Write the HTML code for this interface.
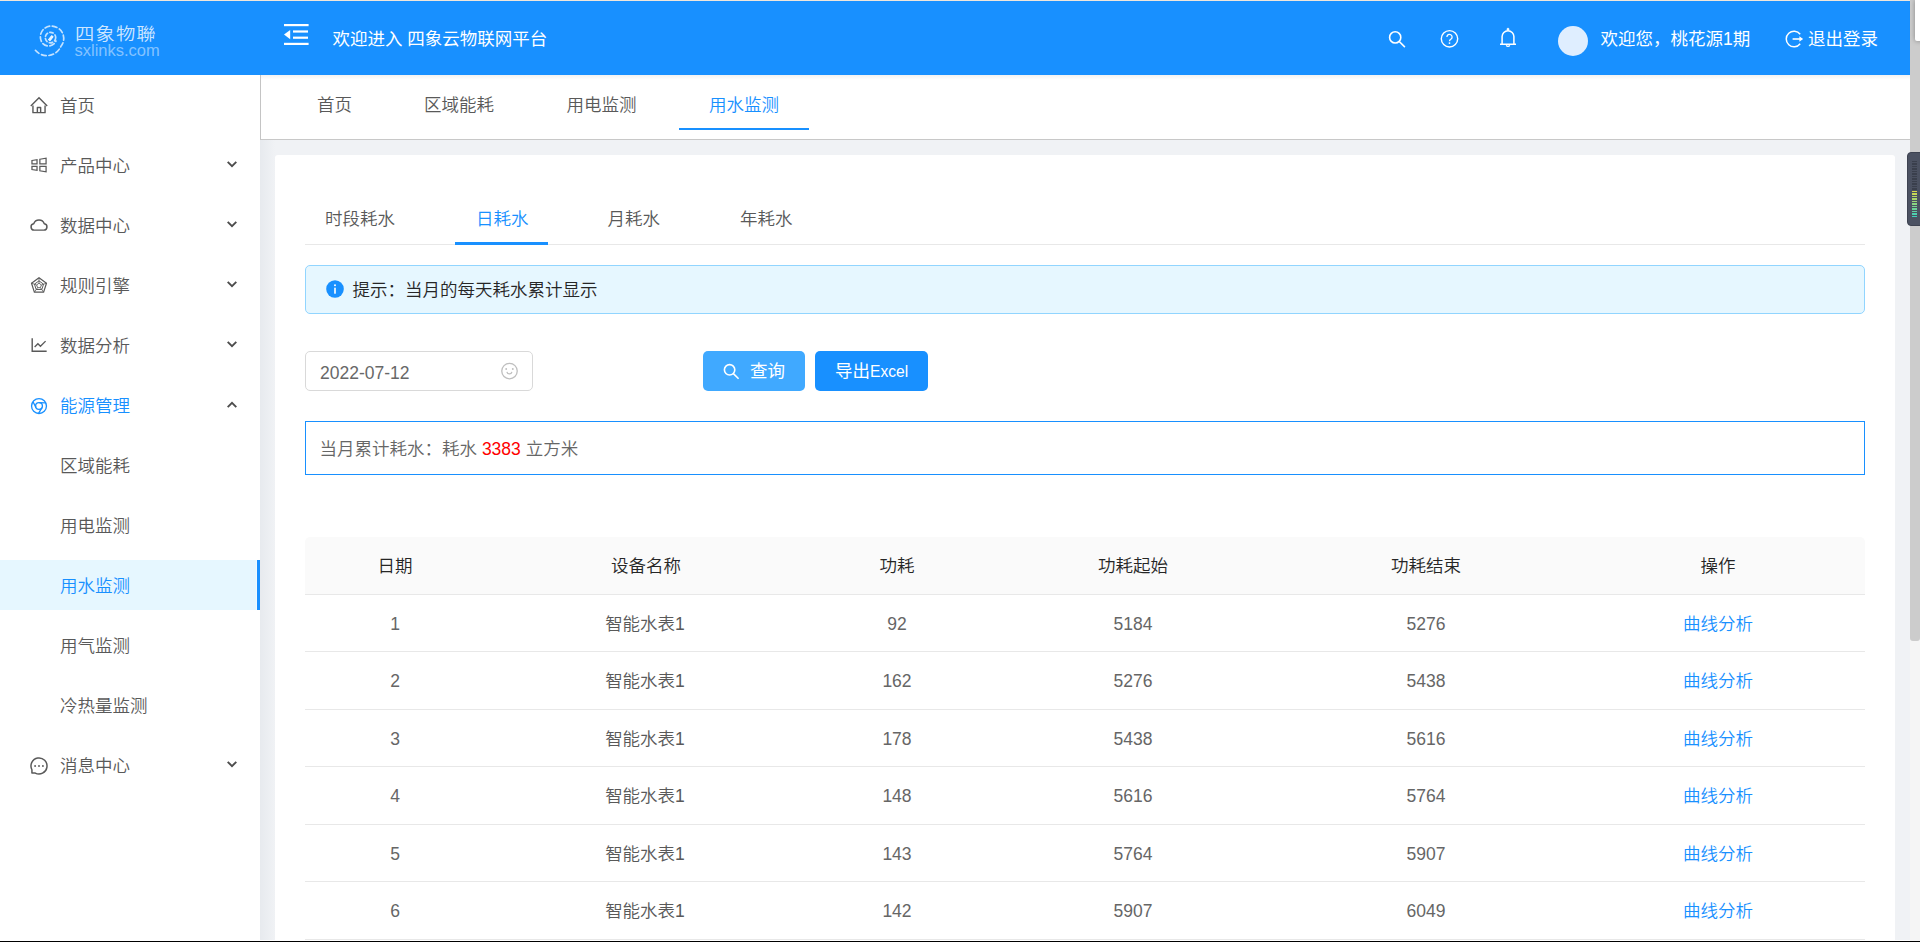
<!DOCTYPE html>
<html lang="zh-CN">
<head>
<meta charset="utf-8">
<title>四象云物联网平台</title>
<style>
*{box-sizing:border-box;margin:0;padding:0}
html,body{width:1920px;height:942px;overflow:hidden;background:#f0f2f5}
body{position:relative;font-family:"Liberation Sans","Noto Sans CJK SC",sans-serif;font-size:17.5px;color:#595959;font-weight:350}
.abs{position:absolute}
.t{position:absolute;white-space:nowrap;line-height:26px;height:26px}
svg{position:absolute;overflow:visible}
/* header */
#topline{left:0;top:0;width:1920px;height:1px;background:#efe6dc}
#header{left:0;top:1px;width:1910px;height:74px;background:#1890ff}
#hdr .t{font-weight:400}
/* sidebar */
#side{left:0;top:75px;width:260px;height:867px;background:#fff}
#sideshadow{left:260px;top:140px;width:15px;height:802px;background:linear-gradient(90deg,#e7eaee,#f0f2f5)}
.mi{position:absolute;left:60px;white-space:nowrap;line-height:26px;height:26px;color:#595959}
.ic{stroke:#595959;fill:none;stroke-width:72;stroke-linejoin:round;stroke-linecap:butt}
.chev{stroke:#4d4d4d;fill:none;stroke-width:1.9}
#sel{left:0;top:560px;width:256px;height:50px;background:#e6f7ff}
#selbar{left:256px;top:560px;width:4px;height:50px;background:#1890ff;border-left:1px solid #f2faff}
/* tab bar */
#tabbar{left:260px;top:75px;width:1650px;height:65px;background:#fff;border-left:1px solid #c4c4c4;border-bottom:1px solid #c8c8c8}
/* card */
#card{left:275px;top:155px;width:1620px;height:800px;background:#fff;border-radius:3px}
#subline{left:305px;top:244px;width:1560px;height:1px;background:#e8e8e8}
#subink{left:455px;top:242px;width:93px;height:3px;background:#1890ff}
#alert{left:305px;top:265px;width:1560px;height:49px;background:#e6f7ff;border:1px solid #91d5ff;border-radius:5px}
#dateinp{left:305px;top:351px;width:228px;height:40px;background:#fff;border:1px solid #d9d9d9;border-radius:5px}
#btn1{left:703px;top:351px;width:102px;height:40px;background:#40a9ff;border-radius:5px}
#btn2{left:815px;top:351px;width:113px;height:40px;background:#1890ff;border-radius:5px}
#sum{left:305px;top:421px;width:1560px;height:54px;background:#fff;border:1px solid #1890ff}
#thead{left:305px;top:537px;width:1560px;height:57px;background:#fafafa;border-radius:5px 5px 0 0}
.rl{position:absolute;left:305px;width:1560px;height:1px;background:#e8e8e8}
.c{position:absolute;white-space:nowrap;line-height:26px;height:26px;width:300px;text-align:center;color:#595959}
.h{color:#262626}
.n{color:#666}
.a{color:#1890ff}
/* scrollbar */
#sbtrack{left:1910px;top:0;width:10px;height:942px;background:#f5f5f5}
#sbthumb{left:1910px;top:0;width:10px;height:641px;background:#ccc;border-radius:0 0 3px 3px}
#corner{left:1915px;top:0;width:8px;height:41px;background:#fff;box-shadow:0 0 5px rgba(0,0,0,.35);border-radius:0 0 0 2px}
#widget{left:1907px;top:152px;width:16px;height:74px;background:#4b5161;border-radius:4px 0 0 4px;border:1px solid #3d4250}
.led{position:absolute;left:1912px;width:5px;height:1.5px}
#bottom{left:0;top:941px;width:1920px;height:1px;background:#000}
#bottomw{left:0;top:940px;width:1910px;height:1px;background:#fff}
#tabshadow{left:261px;top:75px;width:1649px;height:5px;background:linear-gradient(#f2f2f2,#fff)}
</style>
</head>
<body>
<div class="abs" id="topline"></div>
<div class="abs" id="header"></div>
<div class="abs" id="side"></div>
<div class="abs" id="tabbar"></div>
<div class="abs" id="tabshadow"></div>
<div class="abs" id="sideshadow"></div>
<div class="abs" id="card"></div>

<!-- HEADER CONTENT -->
<div id="hdr">
<!-- logo -->
<svg id="logo" style="left:30px;top:20px" width="40" height="40" viewBox="30 20 40 40" fill="none" stroke="rgba(255,255,255,.74)" stroke-linecap="round">
<path d="M35.4 50.3A15.1 15.1 0 0 0 60.8 46.5A12.4 12.4 0 0 0 51.5 26.1A10.8 10.8 0 0 0 41.4 41.5A8 8 0 0 0 56 41" stroke-width="1.7" stroke-dasharray="4.8 2.7"/>
<circle cx="50.5" cy="37.6" r="5.2" stroke-width="1.7" stroke-dasharray="3.4 2.4"/>
<path d="M48.6 39.4l3-3.8 1.6 1.1-2.8 3.8z" fill="rgba(255,255,255,.9)" stroke="rgba(255,255,255,.9)" stroke-width="1"/>
</svg>
<div class="t" style="left:75px;top:22.3px;font-size:16.8px;letter-spacing:1px;color:rgba(255,255,255,.8);font-weight:350;transform:scaleX(1.15);transform-origin:0 0">四象物聯</div>
<div class="t" style="left:74.5px;top:36.5px;font-size:16.5px;color:rgba(255,255,255,.47)">sxlinks.com</div>
<!-- fold icon -->
<svg style="left:284px;top:24px" width="25" height="22" viewBox="0 0 25 22" fill="#fff">
<rect x="0" y="0" width="24.6" height="2.2"/><rect x="9" y="6.4" width="15" height="2.2"/><rect x="9" y="12.6" width="15" height="2.2"/><rect x="0" y="18.8" width="24.6" height="2.2"/>
<path d="M0 10.6L6.2 6v9.2z"/>
</svg>
<div class="t" style="left:332.5px;top:26px;color:#fff">欢迎进入 四象云物联网平台</div>
<!-- search -->
<svg style="left:1388px;top:30px" width="18" height="18" viewBox="0 0 18 18" fill="none" stroke="#fff" stroke-width="1.6"><circle cx="7.2" cy="7.4" r="5.6"/><path d="M11.3 11.5l5.6 5.6"/></svg>
<!-- question -->
<svg style="left:1440px;top:29px" width="19" height="19" viewBox="0 0 19 19" fill="none" stroke="#fff" stroke-width="1.4"><circle cx="9.5" cy="9.8" r="8.2"/><path d="M6.9 7.9a2.6 2.6 0 1 1 3.9 2.3c-.9.5-1.3 1-1.3 2" stroke-width="1.3"/><circle cx="9.5" cy="14.1" r=".9" fill="#fff" stroke="none"/></svg>
<!-- bell -->
<svg style="left:1499px;top:27px" width="18" height="22" viewBox="0 0 18 22" fill="none" stroke="#fff" stroke-width="1.5"><path d="M1 17.3h16M3.1 17.3V9.6a5.9 5.9 0 0 1 11.8 0v7.7"/><circle cx="9" cy="2.2" r="1" fill="#fff" stroke-width=".8"/><path d="M7.3 18.2a1.8 1.8 0 0 0 3.4 0" stroke-width="1.3"/></svg>
<div class="abs" style="left:1558px;top:26px;width:30px;height:30px;border-radius:50%;background:#dfeeff"></div>
<div class="t" style="left:1600.5px;top:26px;color:#fff">欢迎您，桃花源1期</div>
<!-- logout -->
<svg style="left:1785px;top:30px" width="19" height="18" viewBox="0 0 19 18" fill="none" stroke="#fff" stroke-width="1.5"><path d="M15.2 4.2a7.8 7.8 0 1 0 0 9.6"/><path d="M7.6 9h9.6" stroke-width="1.6"/><path d="M14.4 6.3l3.6 2.7-3.6 2.7z" fill="#fff" stroke="none"/></svg>
<div class="t" style="left:1808px;top:26px;color:#fff">退出登录</div>
</div>

<!-- SIDEBAR CONTENT -->
<div id="menu">
<div class="abs" id="sel"></div><div class="abs" id="selbar"></div>
<!-- home -->
<svg class="ic" style="left:29px;top:95px" width="20" height="20" viewBox="0 0 1024 1024"><path d="M92 566L512 146l420 420" stroke-linejoin="miter"/><path d="M202 540v364h620V540"/><path d="M428 904V636h168v268"/></svg>
<div class="mi" style="top:93px">首页</div>
<!-- windows -->
<svg class="ic" style="left:29px;top:155px;stroke-width:64" width="20" height="20" viewBox="0 0 1024 1024"><path d="M152 282l259-43v209H152zM152 576h259v210l-259-42zM556 218l318-53v283H556zM556 576h318v283l-318-52z" stroke-linejoin="miter"/></svg>
<div class="mi" style="top:153px">产品中心</div>
<!-- cloud -->
<svg class="ic" style="left:29px;top:215px;stroke-width:76" width="20" height="20" viewBox="0 0 1024 1024"><path d="M264 774A162 162 0 0 1 242 452A286 286 0 0 1 782 452A162 162 0 0 1 760 774z"/></svg>
<div class="mi" style="top:213px">数据中心</div>
<!-- radar -->
<svg class="ic" style="left:29px;top:275px;stroke-width:62" width="20" height="20" viewBox="0 0 1024 1024"><path d="M512 142L895 420 749 880H275L129 420z"/><path d="M512 300L745 469 656 742H368L279 469z" stroke-width="50"/><path d="M512 420l120 88-46 141H438l-46-141z" stroke-width="44"/><path d="M512 142v278M895 420L632 508M749 880L586 649M275 880l163-231M129 420l263 88" stroke-width="40"/></svg>
<div class="mi" style="top:273px">规则引擎</div>
<!-- line chart -->
<svg class="ic" style="left:29px;top:335px" width="20" height="20" viewBox="0 0 1024 1024"><path d="M164 160v668h740" stroke-linejoin="miter"/><path d="M288 616l168-168 130 130 264-264" stroke-width="70" stroke-linejoin="miter"/></svg>
<div class="mi" style="top:333px">数据分析</div>
<!-- chrome -->
<svg class="ic" style="left:29px;top:395.5px;stroke:#1890ff;stroke-width:68" width="20" height="20" viewBox="0 0 1024 1024"><circle cx="512" cy="512" r="382"/><circle cx="512" cy="512" r="174"/><path d="M512 338l340 18M663 598L490 890M361 598L205 296"/></svg>
<div class="mi" style="top:393px;color:#1890ff">能源管理</div>
<div class="mi" style="top:453px">区域能耗</div>
<div class="mi" style="top:513px">用电监测</div>
<div class="mi" style="top:573px;color:#1890ff">用水监测</div>
<div class="mi" style="top:633px">用气监测</div>
<div class="mi" style="top:693px">冷热量监测</div>
<!-- message -->
<svg class="ic" style="left:29px;top:755.5px;stroke-width:76" width="20" height="20" viewBox="0 0 1024 1024"><path d="M150 704A410 410 0 1 1 320 874H150z"/><circle cx="312" cy="512" r="48" fill="#595959" stroke="none"/><circle cx="512" cy="512" r="48" fill="#595959" stroke="none"/><circle cx="712" cy="512" r="48" fill="#595959" stroke="none"/></svg>
<div class="mi" style="top:753px">消息中心</div>
<!-- chevrons -->
<svg class="chev" style="left:226px;top:160px" width="12" height="8" viewBox="0 0 12 8"><path d="M1.7 1.8L6 6.1l4.3-4.3"/></svg>
<svg class="chev" style="left:226px;top:220px" width="12" height="8" viewBox="0 0 12 8"><path d="M1.7 1.8L6 6.1l4.3-4.3"/></svg>
<svg class="chev" style="left:226px;top:280px" width="12" height="8" viewBox="0 0 12 8"><path d="M1.7 1.8L6 6.1l4.3-4.3"/></svg>
<svg class="chev" style="left:226px;top:340px" width="12" height="8" viewBox="0 0 12 8"><path d="M1.7 1.8L6 6.1l4.3-4.3"/></svg>
<svg class="chev" style="left:226px;top:401px" width="12" height="8" viewBox="0 0 12 8"><path d="M1.7 6.2L6 1.9l4.3 4.3"/></svg>
<svg class="chev" style="left:226px;top:760px" width="12" height="8" viewBox="0 0 12 8"><path d="M1.7 1.8L6 6.1l4.3-4.3"/></svg>
</div>

<!-- TABS -->
<div id="tabs">
<div class="t" style="left:317px;top:92px">首页</div>
<div class="t" style="left:424px;top:92px">区域能耗</div>
<div class="t" style="left:566.5px;top:92px">用电监测</div>
<div class="t" style="left:709px;top:92px;color:#1890ff">用水监测</div>
<div class="abs" style="left:679px;top:128px;width:130px;height:2px;background:#1890ff"></div>
</div>

<!-- CARD CONTENT -->
<div id="content">
<div class="t" style="left:325px;top:205.5px">时段耗水</div>
<div class="t" style="left:476px;top:205.5px;color:#1890ff">日耗水</div>
<div class="t" style="left:607.5px;top:205.5px">月耗水</div>
<div class="t" style="left:740px;top:205.5px">年耗水</div>
<div class="abs" id="subline"></div><div class="abs" id="subink"></div>
<div class="abs" id="alert"></div>
<svg style="left:326px;top:280px" width="18" height="18" viewBox="0 0 18 18"><circle cx="9" cy="9" r="8.8" fill="#1890ff"/><circle cx="9" cy="5.2" r="1.05" fill="#fff" fill-opacity=".95"/><rect x="8.1" y="7.7" width="1.8" height="6" fill="#fff" fill-opacity=".9"/></svg>
<div class="t" style="left:352.5px;top:277px;color:#262626">提示：当月的每天耗水累计显示</div>
<div class="abs" id="dateinp"></div>
<div class="t" style="left:320px;top:360px;color:#686868">2022-07-12</div>
<svg style="left:500px;top:362px" width="19" height="19" viewBox="0 0 19 19" fill="none" stroke="#bfbfbf" stroke-width="1.3"><circle cx="9.5" cy="9.1" r="7.75"/><path d="M6.9 9.9a2.56 2.56 0 0 0 5 0"/><circle cx="6.2" cy="7" r=".95" fill="#bfbfbf" stroke="none"/><circle cx="12.8" cy="7" r=".95" fill="#bfbfbf" stroke="none"/></svg>
<div class="abs" id="btn1"></div>
<svg style="left:723px;top:363px" width="17" height="17" viewBox="0 0 17 17" fill="none" stroke="#fff" stroke-width="1.6"><circle cx="6.6" cy="6.8" r="5.2"/><path d="M10.4 10.6l5.2 5.2"/></svg>
<div class="t" style="left:750px;top:358px;color:#fff;font-weight:400">查询</div>
<div class="abs" id="btn2"></div>
<div class="t" style="left:835px;top:358px;color:#fff;font-weight:400">导出<span style="font-size:15.6px">Excel</span></div>
<div class="abs" id="sum"></div>
<div class="t" style="left:319.5px;top:436px;color:#666">当月累计耗水：耗水 <span style="color:#ff0000">3383</span> 立方米</div>
<div class="abs" id="thead"></div>
</div>

<div id="table">
<div class="rl" style="top:594px"></div>
<div class="rl" style="top:651px"></div>
<div class="rl" style="top:709px"></div>
<div class="rl" style="top:766px"></div>
<div class="rl" style="top:824px"></div>
<div class="rl" style="top:881px"></div>
<div class="rl" style="top:939px"></div>
<div class="c h" style="left:245px;top:552.5px">日期</div>
<div class="c h" style="left:496px;top:552.5px">设备名称</div>
<div class="c h" style="left:747px;top:552.5px">功耗</div>
<div class="c h" style="left:983px;top:552.5px">功耗起始</div>
<div class="c h" style="left:1276px;top:552.5px">功耗结束</div>
<div class="c h" style="left:1568px;top:552.5px">操作</div>
<div class="c n" style="left:245px;top:610.5px">1</div>
<div class="c" style="left:495px;top:610.5px">智能水表1</div>
<div class="c n" style="left:747px;top:610.5px">92</div>
<div class="c n" style="left:983px;top:610.5px">5184</div>
<div class="c n" style="left:1276px;top:610.5px">5276</div>
<div class="c a" style="left:1568px;top:610.5px">曲线分析</div>
<div class="c n" style="left:245px;top:667.5px">2</div>
<div class="c" style="left:495px;top:667.5px">智能水表1</div>
<div class="c n" style="left:747px;top:667.5px">162</div>
<div class="c n" style="left:983px;top:667.5px">5276</div>
<div class="c n" style="left:1276px;top:667.5px">5438</div>
<div class="c a" style="left:1568px;top:667.5px">曲线分析</div>
<div class="c n" style="left:245px;top:725.5px">3</div>
<div class="c" style="left:495px;top:725.5px">智能水表1</div>
<div class="c n" style="left:747px;top:725.5px">178</div>
<div class="c n" style="left:983px;top:725.5px">5438</div>
<div class="c n" style="left:1276px;top:725.5px">5616</div>
<div class="c a" style="left:1568px;top:725.5px">曲线分析</div>
<div class="c n" style="left:245px;top:782.5px">4</div>
<div class="c" style="left:495px;top:782.5px">智能水表1</div>
<div class="c n" style="left:747px;top:782.5px">148</div>
<div class="c n" style="left:983px;top:782.5px">5616</div>
<div class="c n" style="left:1276px;top:782.5px">5764</div>
<div class="c a" style="left:1568px;top:782.5px">曲线分析</div>
<div class="c n" style="left:245px;top:840.5px">5</div>
<div class="c" style="left:495px;top:840.5px">智能水表1</div>
<div class="c n" style="left:747px;top:840.5px">143</div>
<div class="c n" style="left:983px;top:840.5px">5764</div>
<div class="c n" style="left:1276px;top:840.5px">5907</div>
<div class="c a" style="left:1568px;top:840.5px">曲线分析</div>
<div class="c n" style="left:245px;top:897.5px">6</div>
<div class="c" style="left:495px;top:897.5px">智能水表1</div>
<div class="c n" style="left:747px;top:897.5px">142</div>
<div class="c n" style="left:983px;top:897.5px">5907</div>
<div class="c n" style="left:1276px;top:897.5px">6049</div>
<div class="c a" style="left:1568px;top:897.5px">曲线分析</div>
</div>

<!-- SCROLLBAR & OVERLAYS -->
<div class="abs" id="sbtrack"></div>
<div class="abs" id="sbthumb"></div>
<div class="abs" id="corner"></div>
<div class="abs" id="widget"></div>
<div id="leds">
<div class="led" style="top:160.6px;background:#3a3f4c"></div>
<div class="led" style="top:163.1px;background:#3a3f4c"></div>
<div class="led" style="top:165.6px;background:#3a3f4c"></div>
<div class="led" style="top:168.1px;background:#3a3f4c"></div>
<div class="led" style="top:170.6px;background:#3a3f4c"></div>
<div class="led" style="top:173.1px;background:#3a3f4c"></div>
<div class="led" style="top:175.6px;background:#3a3f4c"></div>
<div class="led" style="top:178.1px;background:#3a3f4c"></div>
<div class="led" style="top:180.6px;background:#3a3f4c"></div>
<div class="led" style="top:183.1px;background:#3a3f4c"></div>
<div class="led" style="top:185.6px;background:#3a3f4c"></div>
<div class="led" style="top:188.1px;background:#3a3f4c"></div>
<div class="led" style="top:190.6px;background:#d6db4a"></div>
<div class="led" style="top:193.1px;background:#c7da55"></div>
<div class="led" style="top:195.6px;background:#b8d960"></div>
<div class="led" style="top:198.1px;background:#a9d86c"></div>
<div class="led" style="top:200.6px;background:#9ad777"></div>
<div class="led" style="top:203.1px;background:#8ad682"></div>
<div class="led" style="top:205.6px;background:#7bd48d"></div>
<div class="led" style="top:208.1px;background:#6cd398"></div>
<div class="led" style="top:210.6px;background:#5dd2a4"></div>
<div class="led" style="top:213.1px;background:#4ed1af"></div>
<div class="led" style="top:215.6px;background:#3fd0ba"></div>
</div>
<div class="abs" id="bottomw"></div>
<div class="abs" id="bottom"></div>
</body>
</html>
